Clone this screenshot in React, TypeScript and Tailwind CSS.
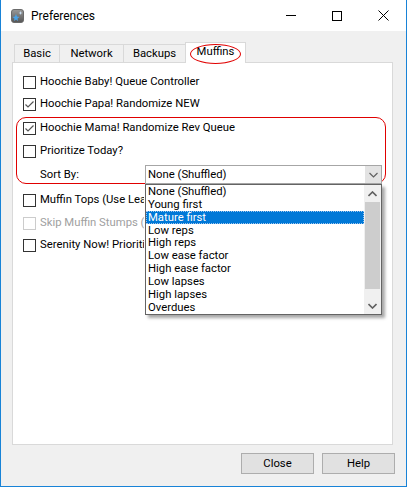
import React from "react";

function Check({ checked, disabled }: { checked?: boolean; disabled?: boolean }) {
  return (
    <div
      className={`w-[13px] h-[13px] shrink-0 border bg-white flex items-center justify-center ${
        disabled ? "border-[#cccccc]" : "border-[#333333]"
      }`}
    >
      {checked && (
        <svg width="11" height="11" viewBox="0 0 11 11">
          <path d="M1.5 5.5 L4 8 L9.5 2.5" fill="none" stroke="#555" strokeWidth="1.2" />
        </svg>
      )}
    </div>
  );
}

function Row({
  label,
  checked,
  disabled,
  mt,
  clip,
}: {
  label: string;
  checked?: boolean;
  disabled?: boolean;
  mt: string;
  clip?: boolean;
}) {
  return (
    <div className={`flex items-center h-[16px] pl-[10px] gap-[4px] whitespace-nowrap ${mt}`}>
      <Check checked={checked} disabled={disabled} />
      <span
        className={`${disabled ? "text-[#a0a0a0]" : "text-black"} ${
          clip ? "w-[104px] overflow-hidden" : ""
        }`}
      >
        {label}
      </span>
    </div>
  );
}

const items = [
  "None (Shuffled)",
  "Young first",
  "Mature first",
  "Low reps",
  "High reps",
  "Low ease factor",
  "High ease factor",
  "Low lapses",
  "High lapses",
  "Overdues",
];

export default function App() {
  return (
    <div className="w-[407px] h-[487px] flex flex-col bg-[#f0f0f0] border-x border-b border-[#1883d7] text-[11.3px] leading-none text-black font-['Roboto',sans-serif] overflow-hidden">
      {/* Title bar */}
      <div className="h-[31px] bg-white flex items-center shrink-0">
        <svg width="13" height="14" viewBox="0 0 13 14" className="ml-[10px]">
          <defs>
            <linearGradient id="g" x1="0" y1="0" x2="0" y2="1">
              <stop offset="0" stopColor="#9a9a9a" />
              <stop offset="1" stopColor="#555" />
            </linearGradient>
          </defs>
          <rect x="0.5" y="0.5" width="12" height="13" rx="2.5" fill="url(#g)" stroke="#6a6a6a" />
          <path d="M5 5 L6 7.5 L8.5 8 L6.5 9.5 L7 12 L5 10.5 L3 12 L3.5 9.5 L1.5 8 L4 7.5 Z" fill="#4aa3e8" />
          <path d="M9.5 2 L10 3.5 L11.5 4 L10 4.5 L9.5 6 L9 4.5 L7.5 4 L9 3.5 Z" fill="#cfe6fb" />
        </svg>
        <span className="ml-[7px] text-[12px]">Preferences</span>
        <div className="flex-1" />
        <div className="w-[46px] h-[30px] flex items-center justify-center">
          <div className="w-[10px] h-px bg-black" />
        </div>
        <div className="w-[46px] h-[30px] flex items-center justify-center">
          <div className="w-[10px] h-[10px] border border-black" />
        </div>
        <div className="w-[46px] h-[30px] flex items-center justify-center">
          <svg width="11" height="11" viewBox="0 0 11 11">
            <path d="M0.5 0.5 L10.5 10.5 M10.5 0.5 L0.5 10.5" stroke="#000" strokeWidth="1" />
          </svg>
        </div>
      </div>

      {/* Body */}
      <div className="flex-1 flex flex-col px-[11px] pt-[11px]">
        {/* Tabs */}
        <div className="flex items-end h-[20px] ml-[2px] relative z-10">
          <div className="w-[45px] h-[18px] border-l border-t border-[#d9d9d9] flex items-center justify-center">Basic</div>
          <div className="w-[64px] h-[18px] border-l border-t border-[#d9d9d9] flex items-center justify-center">Network</div>
          <div className="w-[62px] h-[18px] border-l border-t border-[#d9d9d9] flex items-center justify-center">Backups</div>
          <div className="relative w-[61px] h-[21px] -mb-px border-l border-t border-r border-[#d9d9d9] bg-white flex items-center justify-center pb-[2px]">
            Muffins
            <div className="absolute left-[4px] top-[1px] w-[51px] h-[20px] rounded-[50%] border-[1.5px] border-[#e00000]" />
          </div>
        </div>

        {/* Panel */}
        <div className="relative w-[381px] h-[383px] bg-white border border-[#d9d9d9] flex flex-col pt-[11px]">
          <Row label="Hoochie Baby! Queue Controller" mt="" />
          <Row label="Hoochie Papa! Randomize NEW" checked mt="mt-[6px]" />
          <Row label="Hoochie Mama! Randomize Rev Queue" checked mt="mt-[8px]" />
          <Row label="Prioritize Today?" mt="mt-[7px]" />
          <div className="flex items-center h-[19px] mt-[6px] pl-[27px] relative z-10">
            <span className="w-[105px]">Sort By:</span>
            <div className="w-[237px] h-[19px] border border-[#a6a6a6] bg-white flex items-center">
              <span className="flex-1 pl-[2px]">None (Shuffled)</span>
              <div className="w-[16px] h-full bg-[#e3e3e3] flex items-center justify-center">
                <svg width="9" height="6" viewBox="0 0 9 6">
                  <path d="M0.5 1 L4.5 5 L8.5 1" fill="none" stroke="#606060" strokeWidth="1.2" />
                </svg>
              </div>
            </div>
          </div>
          <Row label="Muffin Tops (Use Learning Cards)" clip mt="mt-[8px]" />
          <Row label="Skip Muffin Stumps (Short)" disabled clip mt="mt-[7px]" />
          <Row label="Serenity Now! Prioritize Lapses" clip mt="mt-[6px]" />

          {/* Red highlight box */}
          <div className="absolute left-[3px] top-[54px] w-[370px] h-[67px] border border-[#e00000] rounded-[10px] pointer-events-none" />

          {/* Open list */}
          <div className="absolute left-[132px] top-[121px] w-[237px] h-[131px] bg-white border border-[#646464] shadow-[3px_3px_3px_rgba(0,0,0,0.35)] flex z-20">
            <div className="w-[218px] flex flex-col">
              {items.map((t, i) => (
                <div
                  key={t}
                  className={`h-[13px] flex items-center pl-[2px] whitespace-nowrap ${
                    i === 2 ? "bg-[#0078d7] text-white outline-1 outline-dotted outline-[#9fc6ee] -outline-offset-1" : ""
                  }`}
                >
                  {t}
                </div>
              ))}
            </div>
            <div className="w-[17px] flex flex-col bg-[#f0f0f0]">
              <div className="h-[17px] flex items-center justify-center">
                <svg width="9" height="6" viewBox="0 0 9 6">
                  <path d="M0.5 5 L4.5 1 L8.5 5" fill="none" stroke="#606060" strokeWidth="1.6" />
                </svg>
              </div>
              <div className="h-[87px] mx-[1px] bg-[#cdcdcd]" />
              <div className="flex-1" />
              <div className="h-[17px] flex items-center justify-center">
                <svg width="9" height="6" viewBox="0 0 9 6">
                  <path d="M0.5 1 L4.5 5 L8.5 1" fill="none" stroke="#606060" strokeWidth="1.6" />
                </svg>
              </div>
            </div>
          </div>
        </div>

        {/* Buttons */}
        <div className="flex justify-end gap-[8px] mt-[8px]">
          <div className="w-[73px] h-[21px] bg-[#e1e1e1] border border-[#adadad] flex items-center justify-center">Close</div>
          <div className="w-[73px] h-[21px] bg-[#e1e1e1] border border-[#adadad] flex items-center justify-center">Help</div>
        </div>
      </div>
    </div>
  );
}
